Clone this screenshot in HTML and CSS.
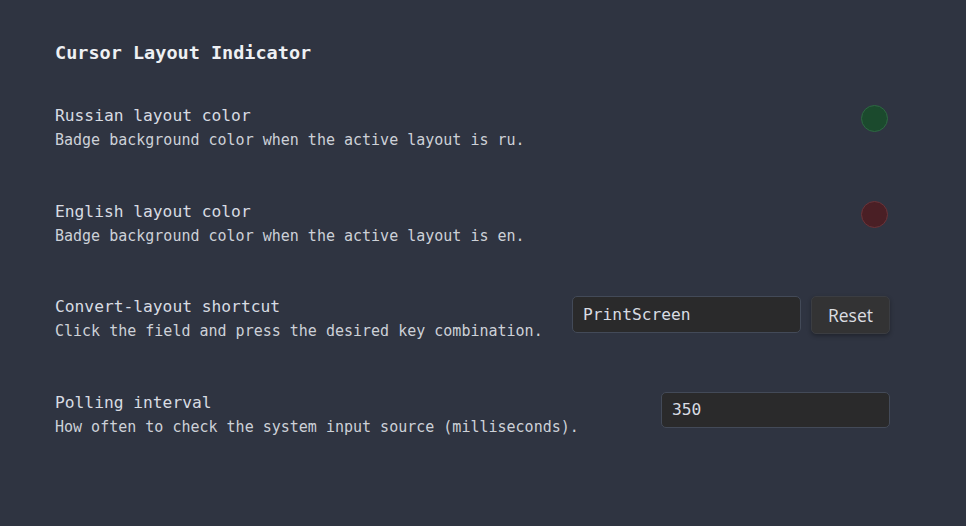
FILE: index.html
```html
<!DOCTYPE html>
<html lang="en">
<head>
<meta charset="utf-8">
<title>Cursor Layout Indicator</title>
<link rel="stylesheet" href="styles.css">
</head>
<body>
<main class="page">
  <h1 class="title">Cursor Layout Indicator</h1>

  <section class="row">
    <div class="text">
      <div class="label">Russian layout color</div>
      <div class="desc">Badge background color when the active layout is ru.</div>
    </div>
    <div class="swatch swatch-ru"></div>
  </section>

  <section class="row">
    <div class="text">
      <div class="label">English layout color</div>
      <div class="desc">Badge background color when the active layout is en.</div>
    </div>
    <div class="swatch swatch-en"></div>
  </section>

  <section class="row">
    <div class="text">
      <div class="label">Convert-layout shortcut</div>
      <div class="desc">Click the field and press the desired key combination.</div>
    </div>
    <div class="controls">
      <input class="field field-tall" type="text" value="PrintScreen" readonly>
      <button class="btn" type="button">Reset</button>
    </div>
  </section>

  <section class="row">
    <div class="text">
      <div class="label">Polling interval</div>
      <div class="desc">How often to check the system input source (milliseconds).</div>
    </div>
    <input class="field" type="text" value="350" readonly>
  </section>
</main>
</body>
</html>
```

FILE: styles.css
```css
html, body {
  margin: 0;
  padding: 0;
  background: #2f3441;
}

body {
  font-family: "DejaVu Sans Mono", "Liberation Mono", monospace;
  color: #d6dae1;
  width: 966px;
  height: 526px;
  overflow: hidden;
}

.page {
  padding: 41px 76px 0 55px;
}

.title {
  margin: 0 0 40px;
  font-size: 18.5px;
  line-height: 24px;
  font-weight: bold;
  color: #eef0f3;
}

.row {
  display: flex;
  justify-content: space-between;
  align-items: flex-start;
  margin-bottom: 50.5px;
}

.text {
  padding-top: 1px;
}

.label {
  font-size: 16.25px;
  line-height: 20px;
  color: #d8dce3;
}

.desc {
  margin-top: 4px;
  font-size: 15px;
  line-height: 20px;
  color: #cdd1d8;
}

.swatch {
  width: 27px;
  height: 27px;
  box-sizing: border-box;
  border-radius: 50%;
  margin-right: 2px;
}

.swatch-ru {
  background: #1b4a2d;
  border: 1px solid #2e6843;
}

.swatch-en {
  background: #4a1f25;
  border: 1px solid #6a343a;
}

.controls {
  display: flex;
  gap: 10px;
  align-items: flex-start;
}

.field {
  width: 229px;
  height: 36px;
  box-sizing: border-box;
  margin: 0;
  padding: 0 10px;
  background: #2a2a2b;
  border: 1px solid #434a58;
  border-radius: 5px;
  color: #d8dce3;
  font-family: "DejaVu Sans Mono", "Liberation Mono", monospace;
  font-size: 16.25px;
  outline: none;
}

.field-tall {
  height: 37px;
}

.btn {
  width: 79px;
  height: 38px;
  box-sizing: border-box;
  margin: 0;
  padding: 0;
  background: #333334;
  border: 1px solid #3b3d42;
  border-radius: 5px;
  color: #dcdee2;
  font-family: "Open Sans", "Noto Sans", sans-serif;
  font-size: 17.5px;
  box-shadow: 0 2px 4px rgba(0, 0, 0, 0.3);
}
```
